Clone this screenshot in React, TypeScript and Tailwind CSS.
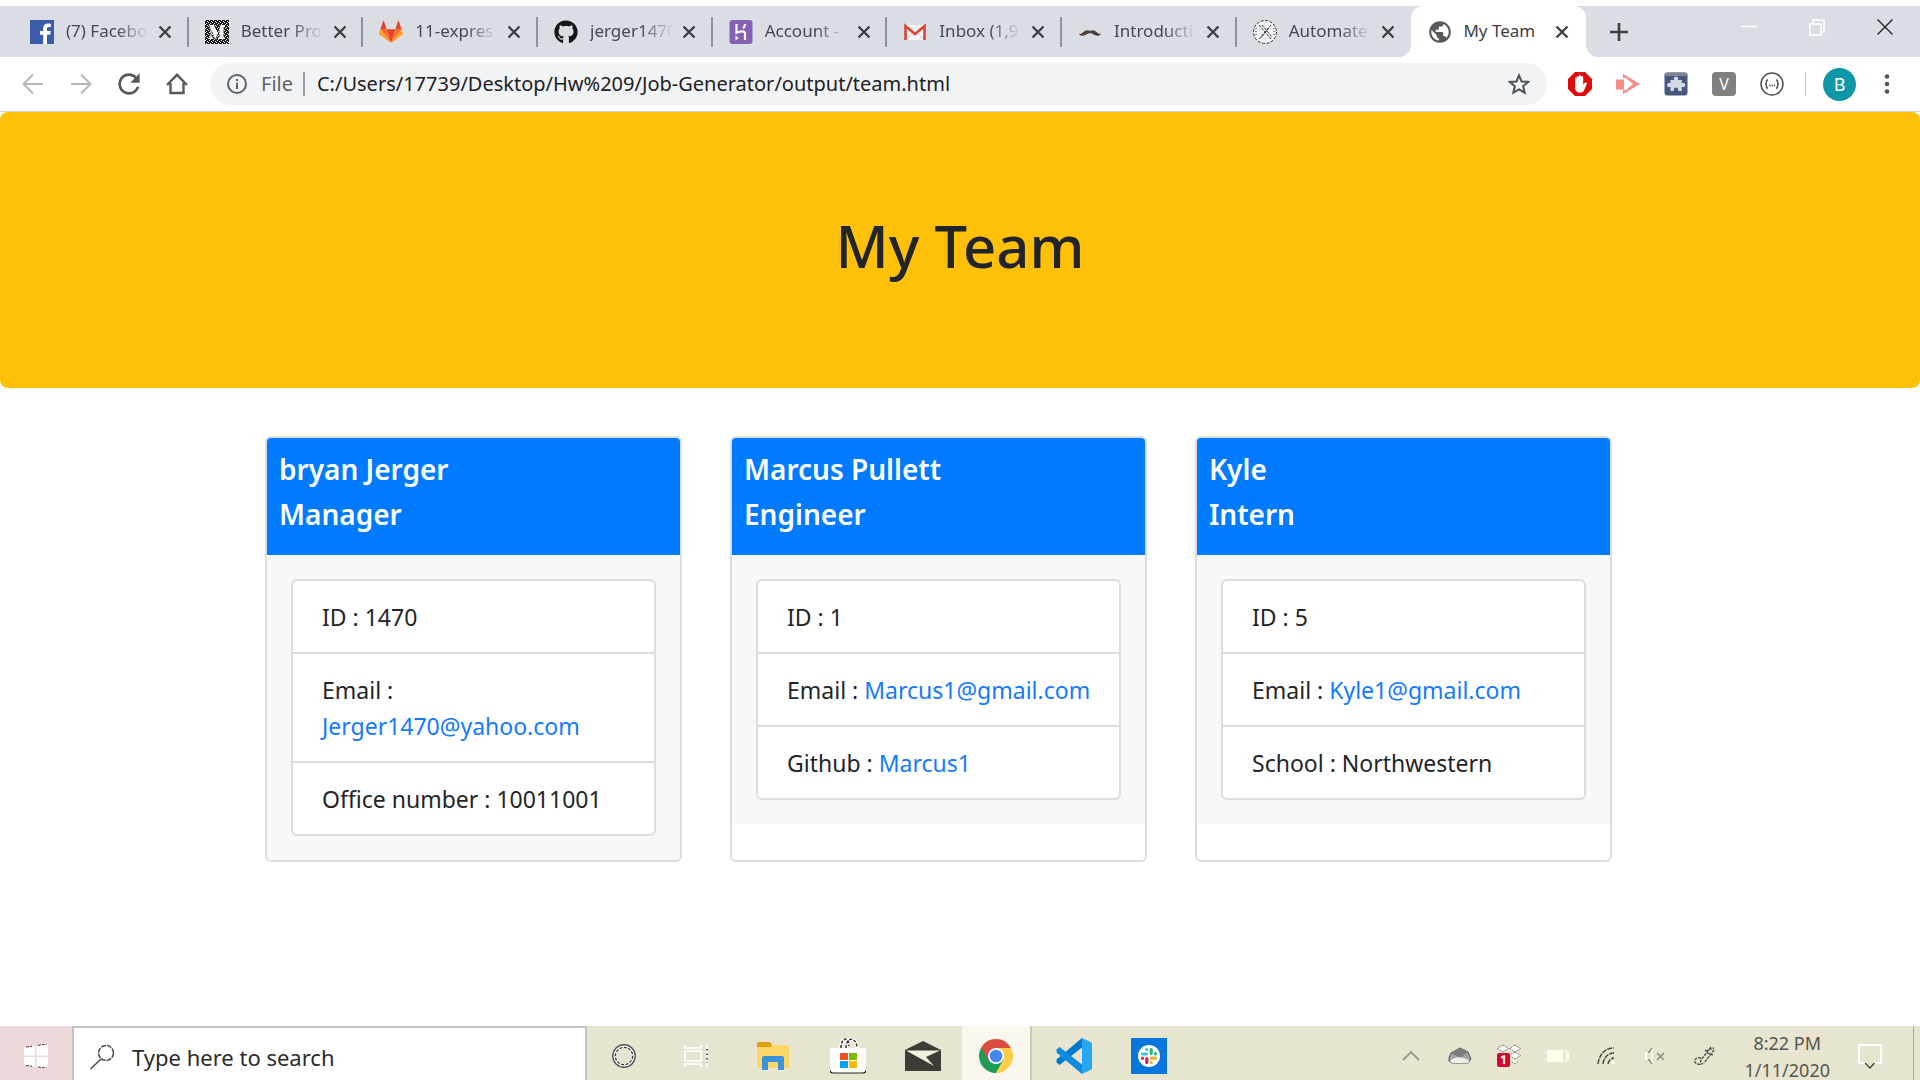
import type { ReactNode } from "react";
import { FaGithub } from "react-icons/fa";
import { MdPublic, MdRefresh } from "react-icons/md";

/* ---------- favicons ---------- */

const FacebookIcon = () => (
  <svg viewBox="0 0 24 24" className="size-6">
    <path d="M0 0h24v24H0z" fill="#3b5cab" />
    <path d="M13.2 24v-9.3H10v-3.6h3.2V8.4c0-3.2 1.9-4.9 4.8-4.9 1.3 0 2.4.1 2.8.2v3.2h-2c-1.5 0-1.8.8-1.8 1.8v2.4h3.7l-.5 3.6H17V24z" fill="#fff" />
  </svg>
);

const MediumIcon = () => (
  <svg viewBox="0 0 24 24" className="size-6">
    <defs>
      <pattern id="speckle" width="4" height="4" patternUnits="userSpaceOnUse">
        <path d="M0 0h4v4H0z" fill="#1b1b1b" />
        <path d="M0 0h1v1H0zM2 1h1v1H2zM1 3h1v1H1zM3 2h1v1H3z" fill="#e8e8e8" />
      </pattern>
    </defs>
    <path d="M0 0h24v24H0z" fill="url(#speckle)" />
    <path d="M4 5h5l3.6 8L16 5h4v1.500l-1.500 1.200v8.800L20 18v1h-7v-1l1.500-1.500V9.500L10.500 19H10L6.500 10v6L8.500 18.500v.5H4v-.5L5.500 16V7.500z" fill="#f4f4f4" />
  </svg>
);

const GitlabIcon = () => (
  <svg viewBox="0 0 24 24" className="size-6">
    <path d="M12 23 7.600 9.300h8.800z" fill="#e24329" />
    <path d="M12 23 7.600 9.300H1.400zM12 23l4.400-13.700h6.200z" fill="#fc6d26" />
    <path d="M1.400 9.300 0 13.500c-.1.400 0 .800.300 1L12 23zM22.600 9.300l1.400 4.200c.1.400 0 .800-.3 1L12 23z" fill="#fca326" />
    <path d="M1.400 9.300h6.200L5 1.200c-.2-.5-.8-.5-.9 0zM22.600 9.300h-6.200L19 1.200c.2-.5.8-.5.9 0z" fill="#e24329" />
  </svg>
);

const HerokuIcon = () => (
  <svg viewBox="0 0 24 24" className="size-6">
    <rect x="0.500" width="23" height="24" rx="3" fill="#8560b4" />
    <g fill="none" stroke="#fff" strokeWidth="2.200">
      <path d="M7.500 4v8.800c3-1.600 8.500-2.600 8.500.9V20" />
      <path d="M16 4c-.1 1.800-.8 3.200-2 4.500" />
    </g>
    <path d="M6.500 15.500 9.600 18l-3.100 2.500z" fill="#fff" />
  </svg>
);

const GmailIcon = () => (
  <svg viewBox="0 0 24 24" className="size-6">
    <path d="M3 5h18v15H3z" fill="#f5f5f5" />
    <path d="M3 20l7-8M21 20l-7-8" stroke="#d0d0d0" />
    <path d="M2.500 20V6L12 14l9.500-8v14" fill="none" stroke="#db4437" strokeWidth="2.600" />
  </svg>
);

const MustacheIcon = () => (
  <svg viewBox="0 0 24 24" className="size-6">
    <path d="M1 13.500c1.500 1 2.500.2 4-1.200C7 10.300 10 9.300 12 11c2-1.700 5-.7 7 1.300 1.500 1.400 2.500 2.200 4 1.200-.5 2.400-4 2.900-6.500 1.500-2-1.100-3-1.800-4.500-1.600-1.500-.2-2.500.5-4.500 1.600C5 16.400 1.500 15.900 1 13.500z" fill="#4d4034" />
  </svg>
);

const CrossedCircleIcon = () => (
  <svg viewBox="0 0 24 24" className="size-6" fill="none" stroke="#333">
    <circle cx="12" cy="12" r="11.500" fill="#f1f2f4" strokeDasharray="3 1.500" />
    <path d="m6 5 12 14M9 5l10 12M18 5 6 19M16 8l-8 10" strokeDasharray="3 1" />
    <path d="M3 8v8M21 8v8" strokeDasharray="1 2" />
  </svg>
);

const CloseIcon = () => (
  <svg viewBox="0 0 14 14" className="size-3.5" fill="none" stroke="#3c4043" strokeWidth="2.400">
    <path d="m1.500 1.500 11 11M12.500 1.500l-11 11" />
  </svg>
);

type TabInfo = { title: string; icon: ReactNode };

const TABS: TabInfo[] = [
  { title: "(7) Facebo", icon: <FacebookIcon /> },
  { title: "Better Pro", icon: <MediumIcon /> },
  { title: "11-expres", icon: <GitlabIcon /> },
  { title: "jerger1470", icon: <FaGithub className="size-6 text-[#161616]" /> },
  { title: "Account -", icon: <HerokuIcon /> },
  { title: "Inbox (1,9", icon: <GmailIcon /> },
  { title: "Introducti", icon: <MustacheIcon /> },
  { title: "Automate", icon: <CrossedCircleIcon /> },
];

function Tab({ title, icon, last }: TabInfo & { last: boolean }) {
  return (
    <div className="flex min-w-0 flex-1 items-center">
      <div className="flex min-w-0 flex-1 items-center pl-4">
        <span className="shrink-0">{icon}</span>
        <span className="ml-3 w-[84px] pb-px text-[17px] whitespace-nowrap text-[#45494d] [mask-image:linear-gradient(to_right,#000_60%,transparent_98%)]">
          {title}
        </span>
        <button aria-label={`Close ${title}`} className="ml-2">
          <CloseIcon />
        </button>
      </div>
      {!last && <span className="h-[30px] w-0.5 shrink-0 bg-[#8f949b]" />}
    </div>
  );
}

function TabStrip() {
  return (
    <div className="mt-1.5 flex h-[51px] justify-between bg-[#dadde3]">
      <div className="flex min-w-0 flex-1 pl-3.5">
        <div className="flex w-[1572px] min-w-0">
          {TABS.map((t, i) => (
            <Tab key={t.title} {...t} last={i === TABS.length - 1} />
          ))}
          <div className="relative flex min-w-0 flex-1 rounded-t-xl bg-white">
            <span className="absolute bottom-0 -left-3 size-3 bg-[radial-gradient(circle_at_0_0,transparent_12px,#fff_12px)]" />
            <span className="absolute -right-3 bottom-0 size-3 bg-[radial-gradient(circle_at_100%_0,transparent_12px,#fff_12px)]" />
            <div className="flex min-w-0 flex-1 items-center pl-4">
              <MdPublic className="size-[26px] shrink-0 text-[#55595e]" />
              <span className="ml-2.5 w-[84px] pb-px text-[17px] whitespace-nowrap text-[#3c4043]">My Team</span>
              <button aria-label="Close My Team" className="ml-2">
                <CloseIcon />
              </button>
            </div>
          </div>
        </div>
        <button aria-label="New tab" className="ml-6">
          <svg viewBox="0 0 18 18" className="size-[18px]" stroke="#3c4043" strokeWidth="2.600">
            <path d="M9 0v18M0 9h18" />
          </svg>
        </button>
      </div>
      <div className="flex items-start gap-[52px] pt-3 pr-[27px]">
        <button aria-label="Minimize">
          <svg viewBox="0 0 16 18" className="h-[18px] w-4" stroke="#fff" strokeWidth="1.500">
            <path d="M0 8.500h16" />
          </svg>
        </button>
        <button aria-label="Restore">
          <svg viewBox="0 0 16 18" className="h-[18px] w-4" fill="none" stroke="#fff" strokeWidth="1.500">
            <path d="M1 6h11v11H1zM4 6V2h11v12h-3" />
          </svg>
        </button>
        <button aria-label="Close">
          <svg viewBox="0 0 16 18" className="h-[18px] w-4" stroke="#222" strokeWidth="1.400">
            <path d="m.5 1.500 15 15M15.500 1.500l-15 15" />
          </svg>
        </button>
      </div>
    </div>
  );
}

/* ---------- toolbar ---------- */

function Toolbar() {
  return (
    <div className="flex h-[55px] items-center border-b border-[#cfd3d8] bg-white pl-[21px]">
      <div className="flex gap-6 text-[#5f6368]">
        <button aria-label="Back">
          <svg viewBox="0 0 24 24" className="size-6" fill="none" stroke="#b4b6b9" strokeWidth="2">
            <path d="M22 12H3M12 2.500 2.500 12l9.500 9.500" />
          </svg>
        </button>
        <button aria-label="Forward">
          <svg viewBox="0 0 24 24" className="size-6" fill="none" stroke="#b4b6b9" strokeWidth="2">
            <path d="M2 12h19M12 2.500l9.500 9.500-9.500 9.500" />
          </svg>
        </button>
        <button aria-label="Reload" className="-mx-1">
          <MdRefresh className="size-8 text-[#55595e]" />
        </button>
        <button aria-label="Home">
          <svg viewBox="0 0 24 24" className="size-6" fill="none" stroke="#55595e" strokeWidth="2.400">
            <path d="M2 13 12 2.800 22 13M5.500 11v10h13V11" />
          </svg>
        </button>
      </div>
      <div className="ml-[21px] flex h-[42px] min-w-0 flex-1 items-center rounded-full bg-[#f2f3f5] pl-[17px]">
        <svg viewBox="0 0 20 20" className="size-5 shrink-0" fill="none" stroke="#5f6368" strokeWidth="2">
          <circle cx="10" cy="10" r="9" />
          <path d="M10 8.800V15M10 5v2" />
        </svg>
        <span className="ml-3.5 text-xl text-[#5f6368]">File</span>
        <span className="mr-3 ml-2.5 h-6 w-0.5 shrink-0 bg-[#9a9da1]" />
        <input
          aria-label="Address"
          className="min-w-0 flex-1 bg-transparent text-xl text-[#202124] outline-none"
          defaultValue="C:/Users/17739/Desktop/Hw%209/Job-Generator/output/team.html"
        />
        <button aria-label="Bookmark this page" className="mr-[17px]">
          <svg viewBox="0 0 24 24" className="size-[22px]" fill="none" stroke="#4f5358" strokeWidth="2.200">
            <path d="m12 2.500 2.800 6.700 7.200.6-5.500 4.700 1.700 7L12 17.800l-6.200 3.700 1.700-7L2 9.800l7.200-.6z" />
          </svg>
        </button>
      </div>
      <div className="ml-[21px] flex items-center gap-6">
        <button aria-label="Ad blocker">
          <svg viewBox="0 0 24 24" className="size-6">
            <path d="M7 0h10l7 7v10l-7 7H7l-7-7V7z" fill="#df0a0a" />
            <path d="M7 12V6.500a1 1 0 0 1 2 0V5a1 1 0 0 1 2 0V4a1 1 0 0 1 2 0v1a1 1 0 0 1 2.200 0v8l1.600-2.200a1.200 1.200 0 0 1 2 1.200L16 18.500c-.8 1.400-2 2-4 2-3 0-5-2-5-5z" fill="#fff" />
          </svg>
        </button>
        <button aria-label="Screen recorder">
          <svg viewBox="0 0 24 24" className="size-6" fill="#f98a8a">
            <path d="M0 7.500h8v10H0zM7 2l17 10L7 22v-4h3l7-6-7-6H7z" />
            <path d="M9.500 9.500v6l5-3z" fill="#fff" />
          </svg>
        </button>
        <button aria-label="Puzzle extension">
          <svg viewBox="0 0 24 24" className="size-6">
            <rect x="0.500" y="0.500" width="23" height="23" rx="3" fill="#47577f" />
            <path d="M.5 4V3.500a3 3 0 0 1 3-3h17a3 3 0 0 1 3 3V4z" fill="#7f8694" />
            <path d="M6.500 8h3.700a2.200 2.200 0 1 1 3.600 0h4v3.200a2.200 2.200 0 1 1 0 3.600V19h-4a2.200 2.200 0 1 0-3.600 0H6.500v-4.200a2.200 2.200 0 1 1 0-3.600z" fill="#d5dbe6" />
          </svg>
        </button>
        <button aria-label="V extension" className="flex size-6 items-center justify-center rounded-sm bg-[#808080] text-base text-white">
          V
        </button>
        <button aria-label="JSON viewer">
          <svg viewBox="0 0 24 24" className="size-6" fill="none" stroke="#555" strokeWidth="1.500">
            <circle cx="12" cy="12" r="11" />
            <path d="M8 8c-1.800 0-1.500 1-1.500 2.200S6 12 5 12c1 0 1.500.6 1.500 1.800S6.200 16 8 16M16 8c1.800 0 1.500 1 1.500 2.200S18 12 19 12c-1 0-1.500.6-1.500 1.800S17.800 16 16 16" />
            <path d="M9 13.500h6" strokeDasharray="1.500 1" />
          </svg>
        </button>
      </div>
      <span className="ml-[21px] h-6 w-px bg-[#c4c7cb]" />
      <button aria-label="Profile" className="ml-[17px] flex size-[33px] items-center justify-center rounded-full bg-[#0e97a7] text-lg text-white">
        B
      </button>
      <button aria-label="Menu" className="mr-[30px] ml-7">
        <svg viewBox="0 0 6 20" className="h-5 w-1.5" fill="#55595e">
          <circle cx="3" cy="2.500" r="2.300" />
          <circle cx="3" cy="10" r="2.300" />
          <circle cx="3" cy="17.500" r="2.300" />
        </svg>
      </button>
    </div>
  );
}

/* ---------- team page ---------- */

type Row = { label: string; value: string; link?: boolean };
type Member = { name: string; role: string; rows: Row[] };

const MEMBERS: Member[] = [
  {
    name: "bryan Jerger",
    role: "Manager",
    rows: [
      { label: "ID", value: "1470" },
      { label: "Email", value: "Jerger1470@yahoo.com", link: true },
      { label: "Office number", value: "10011001" },
    ],
  },
  {
    name: "Marcus Pullett",
    role: "Engineer",
    rows: [
      { label: "ID", value: "1" },
      { label: "Email", value: "Marcus1@gmail.com", link: true },
      { label: "Github", value: "Marcus1", link: true },
    ],
  },
  {
    name: "Kyle",
    role: "Intern",
    rows: [
      { label: "ID", value: "5" },
      { label: "Email", value: "Kyle1@gmail.com", link: true },
      { label: "School", value: "Northwestern" },
    ],
  },
];

function MemberCard({ name, role, rows }: Member) {
  return (
    <article className="w-[417px] overflow-hidden rounded-md border-2 border-[#dcdddf] bg-white">
      <header className="bg-[#007bff] px-3 pt-[9px] pb-[18px] text-[28px] leading-[45px] font-semibold text-white">
        <h2>{name}</h2>
        <h2>{role}</h2>
      </header>
      <div className="bg-[#f7f8fa] p-6">
        <ul className="divide-y-2 divide-[#dcdddf] rounded-md border-2 border-[#dcdddf] bg-white text-[23px] leading-9 text-[#212529]">
          {rows.map((r) => (
            <li key={r.label} className="pt-[18px] pr-6 pb-[17px] pl-[29px]">
              {r.label} : {r.link ? <a href="#" className="text-[#147aff]">{r.value}</a> : r.value}
            </li>
          ))}
        </ul>
      </div>
    </article>
  );
}

/* ---------- taskbar ---------- */

const FolderIcon = () => (
  <svg viewBox="0 0 32 28" className="h-7 w-8">
    <path d="M0 2a2 2 0 0 1 2-2h11l2 3v4H0z" fill="#e0a100" />
    <path d="M0 5h13l3-2h14a2 2 0 0 1 2 2v20a1 1 0 0 1-1 1H1a1 1 0 0 1-1-1z" fill="#fed667" />
    <path d="M5 28V16a2 2 0 0 1 2-2h18a2 2 0 0 1 2 2v12h-6v-8H11v8z" fill="#3a92dc" />
  </svg>
);

const StoreIcon = () => (
  <svg viewBox="0 0 36 36" className="size-9">
    <path d="M11 10c0-11 8-12 8-2M16 10c0-12 11-11 11 0" fill="none" stroke="#fff" strokeWidth="3.500" />
    <path d="M11 10c0-11 8-12 8-2M16 10c0-12 11-11 11 0" fill="none" stroke="#333" strokeWidth="1.500" strokeDasharray="3 1.500" />
    <path d="M0 10h36v22a3 3 0 0 1-3 3H3a3 3 0 0 1-3-3z" fill="#fff" />
    <path d="M0 32c0 2 1 3 3 3h30c2 0 3-1 3-3" fill="none" stroke="#222" strokeWidth="1.200" />
    <path d="M10 15h8v7h-8z" fill="#f25022" />
    <path d="M19 15h8v7h-8z" fill="#7fba00" />
    <path d="M10 23h8v7h-8z" fill="#00a4ef" />
    <path d="M19 23h8v7h-8z" fill="#ffb900" />
  </svg>
);

const MailIcon = () => (
  <svg viewBox="0 0 36 30" className="h-[30px] w-9">
    <path d="M0 9 18 0l18 9v21H0z" fill="#3d3c37" />
    <path d="M1 9.500h34L21 16l8 9L1 9.500z" fill="#f3efdf" />
  </svg>
);

const ChromeIcon = () => (
  <svg viewBox="0 0 34 34" className="size-[34px]">
    <path d="M2.300 8.500A17 17 0 0 0 17 34l7.400-12.800L17 17z" fill="#1f9d58" />
    <path d="M31.700 8.500A17 17 0 0 1 17 34l7.400-12.800L17 9h14.900z" fill="#ffcd46" />
    <path d="M17 9h14.900A17 17 0 0 0 2.300 8.500l7.400 12.700z" fill="#dd4b3e" />
    <circle cx="17" cy="17" r="8" fill="#fff" />
    <circle cx="17" cy="17" r="6.300" fill="#4587f3" />
  </svg>
);

const VsCodeIcon = () => (
  <svg viewBox="0 0 36 36" className="size-9">
    <path d="M26 9.500 3.500 27 0.500 24.500v-3L26 0z" fill="#0179cb" />
    <path d="M26 26.500 3.500 9 0.500 11.500v3L26 36z" fill="#0e8ade" />
    <path d="m26 0 8.500 4A2 2 0 0 1 36 6v24a2 2 0 0 1-1.500 2L26 36z" fill="#27a9f2" />
  </svg>
);

const SlackIcon = () => (
  <svg viewBox="0 0 36 36" className="size-9">
    <path d="M0 0h36v36H0z" fill="#0676dc" />
    <circle cx="18" cy="18" r="11" fill="#fff" />
    <g fill="none" strokeWidth="3.200" strokeLinecap="round">
      <path d="M11.500 16h4M15.700 11.500h.1" stroke="#36c5f0" />
      <path d="M20.200 11.500v4M24.500 15.700v.1" stroke="#2eb67d" />
      <path d="M20.500 20.200h4M20.200 24.500h.1" stroke="#ecb22e" />
      <path d="M15.800 20.500v4M11.500 20.200v.1" stroke="#e01e5a" />
    </g>
  </svg>
);

const TaskViewIcon = () => (
  <svg viewBox="0 0 26 24" className="h-6 w-[26px]" fill="none" stroke="#fff" strokeWidth="1.600">
    <path d="M1 7h16v10H1zM1 1v3h16V1M1 23v-3h16v3M23 0v24" />
    <path d="M23 5v14" stroke="#333" strokeDasharray="1.500 3" />
  </svg>
);

const APPS: { label: string; icon: ReactNode }[] = [
  { label: "File Explorer", icon: <FolderIcon /> },
  { label: "Microsoft Store", icon: <StoreIcon /> },
  { label: "Mail", icon: <MailIcon /> },
];

const TRAY: { label: string; icon: ReactNode }[] = [
  {
    label: "Show hidden icons",
    icon: (
      <svg viewBox="0 0 24 24" className="size-6" fill="none" stroke="#9a978c" strokeWidth="1.800">
        <path d="m4 16 8-8 8 8" />
      </svg>
    ),
  },
  {
    label: "OneDrive",
    icon: (
      <svg viewBox="0 0 24 24" className="size-6">
        <path d="m1 14 2-5 9-5 8 4 3 7-3 4H4l-3-2z" fill="#a4a4a4" stroke="#555" />
        <path d="m3 9 9-5 8 4-8 6z" fill="#7c7c7c" />
        <path d="M2 17c5-5 13-5 19 0l-1 2H4z" fill="#f0f0f0" />
      </svg>
    ),
  },
  {
    label: "Dropbox",
    icon: (
      <svg viewBox="0 0 24 24" className="size-6">
        <path d="m6 1 5.500 3.500L6 8 .5 4.500zM18 1l5.500 3.500L18 8l-5.500-3.500zM18 8l5.500 3.500L18 15l-5.500-3.500zM12 16l6 4 3-3" fill="#fff" stroke="#777" strokeDasharray="2 1" />
        <rect y="9" width="13" height="14" rx="2" fill="#d3092b" />
        <text x="6.500" y="20" textAnchor="middle" fontSize="12" fontWeight="700" fill="#fff">1</text>
      </svg>
    ),
  },
  {
    label: "Battery",
    icon: (
      <svg viewBox="0 0 24 24" className="size-6" fill="#fffef0">
        <path d="M1 6h16v12H1zM18.500 6h2.500v2h2v8h-2v2h-2.500v-1.500h1.500v-9h-1.500z" />
      </svg>
    ),
  },
  {
    label: "Wi-Fi",
    icon: (
      <svg viewBox="0 0 24 24" className="size-6" fill="none" stroke="#4a4a45" strokeWidth="1.500">
        <path d="M3 20C4 11 10 4 19 4M8 20c.5-6 5-11 11-11M13 20c.3-3 3-6 6-6" strokeDasharray="5 1" />
        <circle cx="18" cy="19" r="1" stroke="#fff" />
      </svg>
    ),
  },
  {
    label: "Volume muted",
    icon: (
      <svg viewBox="0 0 24 24" className="size-6" fill="none" stroke="#fff" strokeWidth="1.500">
        <path d="M2 9h2l4-5v16l-4-5H2z" />
        <path d="M8 4 4 9M8 20l-4-5M13 9l7 7M20 9l-7 7" stroke="#8c8a80" />
      </svg>
    ),
  },
  {
    label: "Pen",
    icon: (
      <svg viewBox="0 0 24 24" className="size-6" fill="none" stroke="#55554e" strokeWidth="1.400" strokeDasharray="3 1">
        <path d="M18 3 8 16l-1 5M21 6 11 19M12 7l9-3M8 14c-4-1-7 1-6 4s7 3 8 1M14 9l6 2" />
      </svg>
    ),
  },
];

function Taskbar() {
  return (
    <footer className="flex h-[54px] overflow-hidden bg-[#e7e4cf]">
      <button aria-label="Start" className="flex w-[72px] items-center justify-center bg-[#eed9da] pt-1.5">
        <svg viewBox="0 0 24 24" className="size-6">
          <path d="M0 3.500 11 2v9.500H0zM12.500 1.800 24 0v11.500H12.500zM0 13h11v9.500L0 21zM12.500 13H24v11l-11.500-1.700z" fill="#fff" />
          <path d="m2 3 6-.8M14 1.400 23 0M2 21.500l6 .8M14 23l9 1" stroke="#444" strokeDasharray="3 1" />
        </svg>
      </button>
      <label className="flex w-[515px] items-center border-2 border-b-0 border-[#c3c2c3] bg-white pt-1.5 pl-[15px]">
        <svg viewBox="0 0 26 26" className="size-[26px] shrink-0" fill="none" stroke="#4a4a4a" strokeWidth="1.500">
          <circle cx="17" cy="9" r="7.500" strokeDasharray="5 1" />
          <path d="M12 15 1.500 25" />
        </svg>
        <input
          aria-label="Type here to search"
          placeholder="Type here to search"
          className="ml-[17px] min-w-0 flex-1 bg-transparent text-[22px] outline-none placeholder:text-[#2b2b2b]"
        />
      </label>
      <button aria-label="Cortana" className="flex w-[74px] items-center justify-center pt-1.5">
        <svg viewBox="0 0 24 24" className="size-6" fill="none">
          <circle cx="12" cy="12" r="10" stroke="#fff" strokeWidth="3" />
          <circle cx="12" cy="12" r="11.200" stroke="#555" strokeWidth="1.400" />
          <circle cx="12" cy="12" r="8.700" stroke="#333" strokeWidth="1.200" strokeDasharray="3 1.500" />
        </svg>
      </button>
      <button aria-label="Task View" className="flex w-[72px] items-center justify-center pt-1.5">
        <TaskViewIcon />
      </button>
      <div className="flex px-0.5">
        {APPS.map((a) => (
          <button key={a.label} aria-label={a.label} className="flex w-[75px] items-center justify-center pt-1.5">
            {a.icon}
          </button>
        ))}
      </div>
      <button aria-label="Google Chrome" className="flex w-[70px] items-center justify-center border-r-2 border-[#cccab9] bg-[#faf8ee] pt-1.5">
        <ChromeIcon />
      </button>
      <div className="flex pl-1">
        <button aria-label="Visual Studio Code" className="flex w-[75px] items-center justify-center pt-1.5">
          <VsCodeIcon />
        </button>
        <button aria-label="Slack" className="flex w-[75px] items-center justify-center pt-1.5">
          <SlackIcon />
        </button>
      </div>
      <div className="ml-auto flex">
        <div className="flex items-center gap-[25px] pt-1.5">
          {TRAY.map((t) => (
            <button key={t.label} aria-label={t.label}>
              {t.icon}
            </button>
          ))}
        </div>
        <div className="ml-7 flex flex-col items-center pt-1 text-lg leading-[27px] text-[#57564f]">
          <time>8:22 PM</time>
          <time>1/11/2020</time>
        </div>
        <button aria-label="Notifications" className="ml-7 pt-2">
          <svg viewBox="0 0 24 26" className="h-[26px] w-6" fill="none" stroke="#fff" strokeWidth="1.800">
            <path d="M8 19H1V1h22v18h-7" />
            <path d="m7 19 5 5 4.500-5" stroke="#444" strokeWidth="1.400" />
          </svg>
        </button>
        <span className="mr-1.5 ml-[31px] w-px bg-[#a9a798]" />
      </div>
    </footer>
  );
}

export default function App() {
  return (
    <div className="flex min-h-screen flex-col bg-white font-['Noto_Sans','Open_Sans',sans-serif]">
      <TabStrip />
      <Toolbar />
      <main className="flex-1">
        <div className="rounded-lg bg-[#ffc107] px-8 pt-[92px] pb-[100px] text-center">
          <h1 className="text-[58px] leading-[84px] font-medium text-[#212529]">My Team</h1>
        </div>
        <section className="mt-12 flex items-stretch justify-center gap-12 pr-[43px]">
          {MEMBERS.map((m) => (
            <MemberCard key={m.name} {...m} />
          ))}
        </section>
      </main>
      <Taskbar />
    </div>
  );
}
